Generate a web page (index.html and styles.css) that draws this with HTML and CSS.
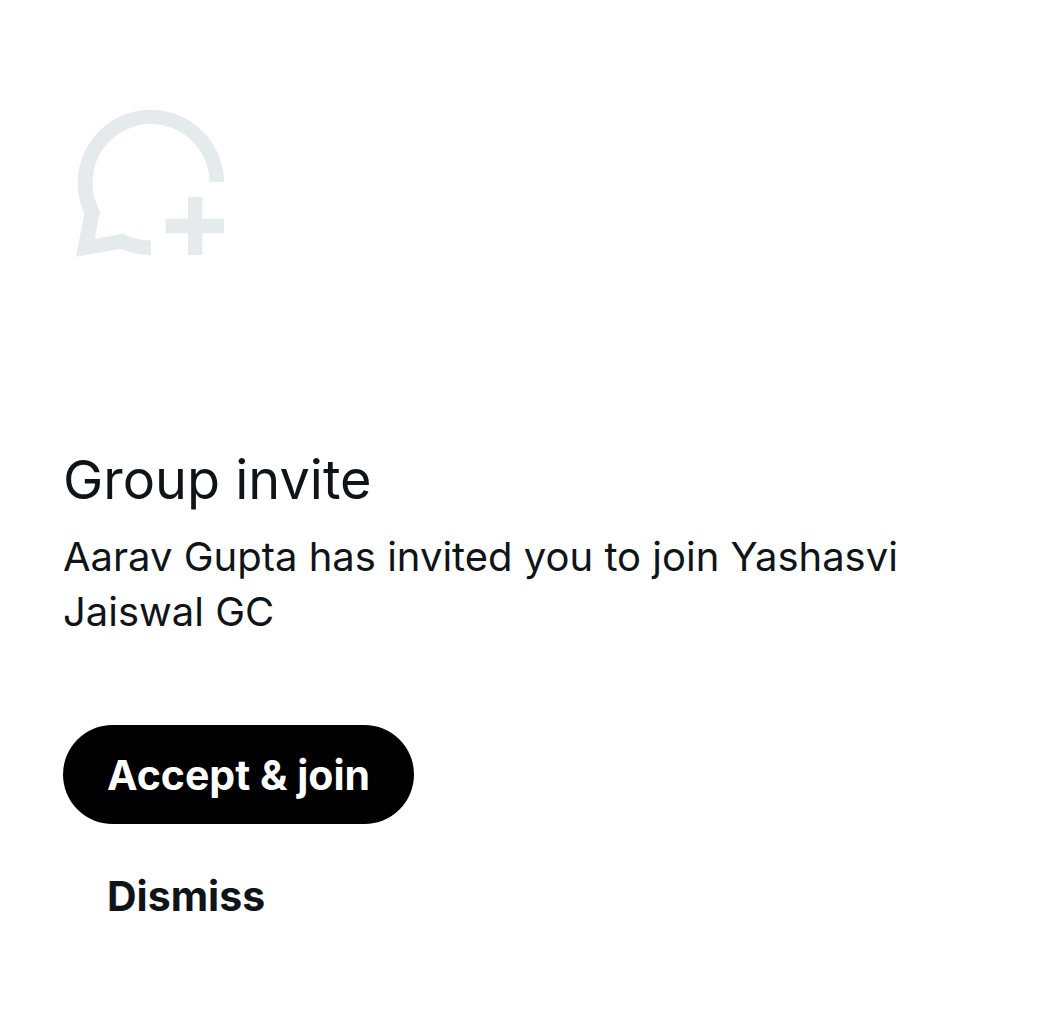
FILE: index.html
```html
<!DOCTYPE html>
<html lang="en">
<head>
    <meta charset="UTF-8">
    <meta name="viewport" content="width=device-width, initial-scale=1">
    <title>Group invite</title>
    <link rel="stylesheet" href="styles.css">
</head>
<body>
    <main class="invite">
        <svg class="invite-icon" viewBox="0 0 176 176" aria-hidden="true">
            <path d="M161 88 H146.5 A58.5 58.5 0 1 0 33.8 110.5 Q35 114 37 118 L31.8 145 L59.5 139.8 Q73 146.4 88 146.4 V161 Q72 161 57.5 154.8 L13 162.8 L21.3 119.5 A73.2 73.2 0 1 1 161 88 Z" />
            <path d="M125 103 H139.4 V124.7 H161 V139.2 H139.4 V161 H125 V139.2 H102.7 V124.7 H125 Z" />
        </svg>
        <h1>Group invite</h1>
        <p>Aarav Gupta has invited you to join Yashasvi Jaiswal GC</p>
        <div class="actions">
            <button type="button" class="btn btn-accept">Accept &amp; join</button>
            <button type="button" class="btn btn-dismiss">Dismiss</button>
        </div>
    </main>
</body>
</html>
```
FILE: styles.css
```css
body {
    margin: 0;
    background-color: #ffffff;
    color: #0f1419;
    font-family: Inter, sans-serif;
}
.invite {
    padding: 94px 63px 64px;
}
.invite-icon {
    display: block;
    width: 176px;
    height: 176px;
    margin-bottom: 172px;
    fill: #e5eaec;
}
h1 {
    margin: 0 0 12px;
    font-size: 54px;
    font-weight: 400;
    line-height: 75px;
}
p {
    margin: 0 0 86px;
    max-width: 860px;
    font-size: 40px;
    line-height: 55px;
}
.actions {
    display: flex;
    flex-direction: column;
    align-items: flex-start;
    gap: 22px;
}
.btn {
    padding: 0 44px;
    height: 99px;
    border: none;
    border-radius: 50px;
    font-family: inherit;
    font-size: 41px;
    font-weight: 700;
    cursor: pointer;
}
.btn-accept {
    background-color: #000000;
    color: #ffffff;
}
.btn-dismiss {
    background-color: transparent;
    color: #0f1419;
}
```
